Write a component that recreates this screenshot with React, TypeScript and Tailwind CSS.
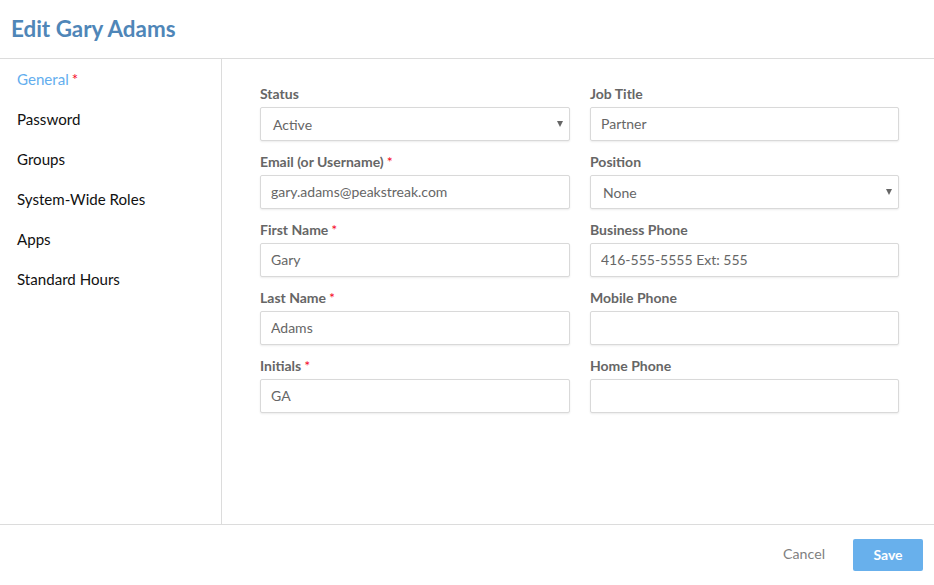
import React from 'react';

const navItems = ['General', 'Password', 'Groups', 'System-Wide Roles', 'Apps', 'Standard Hours'];

const Label = ({ text, required }: { text: string; required?: boolean }) => (
  <label className="block h-[20px] text-[14px] leading-[20px] font-bold text-[#666666]">
    {text}
    {required && <span className="ml-[3px] font-normal text-[#f5071f]">*</span>}
  </label>
);

const TextField = ({ label, value = '', required }: { label: string; value?: string; required?: boolean }) => (
  <div className="h-[68px] pt-[8px]">
    <Label text={label} required={required} />
    <input
      readOnly
      value={value}
      className="mt-[3px] block h-[34px] w-full rounded-[2px] border border-[#d9d9d9] bg-white px-[10px] pb-[2px] text-[14px] text-[#666666] shadow-[0_1px_2px_rgba(0,0,0,0.08)] outline-none"
    />
  </div>
);

const SelectField = ({ label, value }: { label: string; value: string }) => (
  <div className="h-[68px] pt-[8px]">
    <Label text={label} />
    <div className="relative mt-[3px] flex h-[34px] items-center rounded-[2px] border border-[#d9d9d9] bg-white pl-[12px] text-[14px] text-[#666666] shadow-[0_1px_2px_rgba(0,0,0,0.08)]">
      {value}
      <svg viewBox="0 0 6 6" className="absolute right-[6px] top-[13px] h-[6px] w-[6px]">
        <path d="M0 0h6L3 6z" fill="#666666" />
      </svg>
    </div>
  </div>
);

export default function App() {
  return (
    <div className="flex h-[585px] w-[934px] flex-col bg-white font-['Lato',sans-serif]">
      <header className="flex h-[59px] shrink-0 items-center border-b border-[#dcdcdc] pb-[1px] pl-[11px]">
        <h1 className="text-[22.4px] font-bold text-[#4f86b8]">Edit Gary Adams</h1>
      </header>
      <div className="flex min-h-0 flex-1">
        <nav className="w-[222px] shrink-0 border-r border-[#dcdcdc] pl-[17px]">
          {navItems.map((item, i) => (
            <div key={item} className={`h-[40px] text-[15.1px] leading-[40px] ${i === 0 ? 'text-[#63aeee]' : 'text-[#111111]'}`}>
              {item}
              {i === 0 && <span className="ml-[3px] text-[#f5071f]">*</span>}
            </div>
          ))}
        </nav>
        <main className="grid flex-1 grid-cols-[310px_309px] content-start gap-x-[20px] pl-[38px] pt-[17px]">
          <SelectField label="Status" value="Active" />
          <TextField label="Job Title" value="Partner" />
          <TextField label="Email (or Username)" value="gary.adams@peakstreak.com" required />
          <SelectField label="Position" value="None" />
          <TextField label="First Name" value="Gary" required />
          <TextField label="Business Phone" value="416-555-5555 Ext: 555" />
          <TextField label="Last Name" value="Adams" required />
          <TextField label="Mobile Phone" />
          <TextField label="Initials" value="GA" required />
          <TextField label="Home Phone" />
        </main>
      </div>
      <footer className="flex h-[61px] shrink-0 items-start justify-end border-t border-[#dcdcdc] pr-[11px] pt-[14px]">
        <button className="mr-[28px] h-[32px] pb-[2px] text-[14.2px] text-[#7f7f7f]">Cancel</button>
        <button className="h-[32px] w-[70px] rounded-[2px] bg-[#68b0ec] pb-[2px] text-[14px] font-bold text-white">Save</button>
      </footer>
    </div>
  );
}
